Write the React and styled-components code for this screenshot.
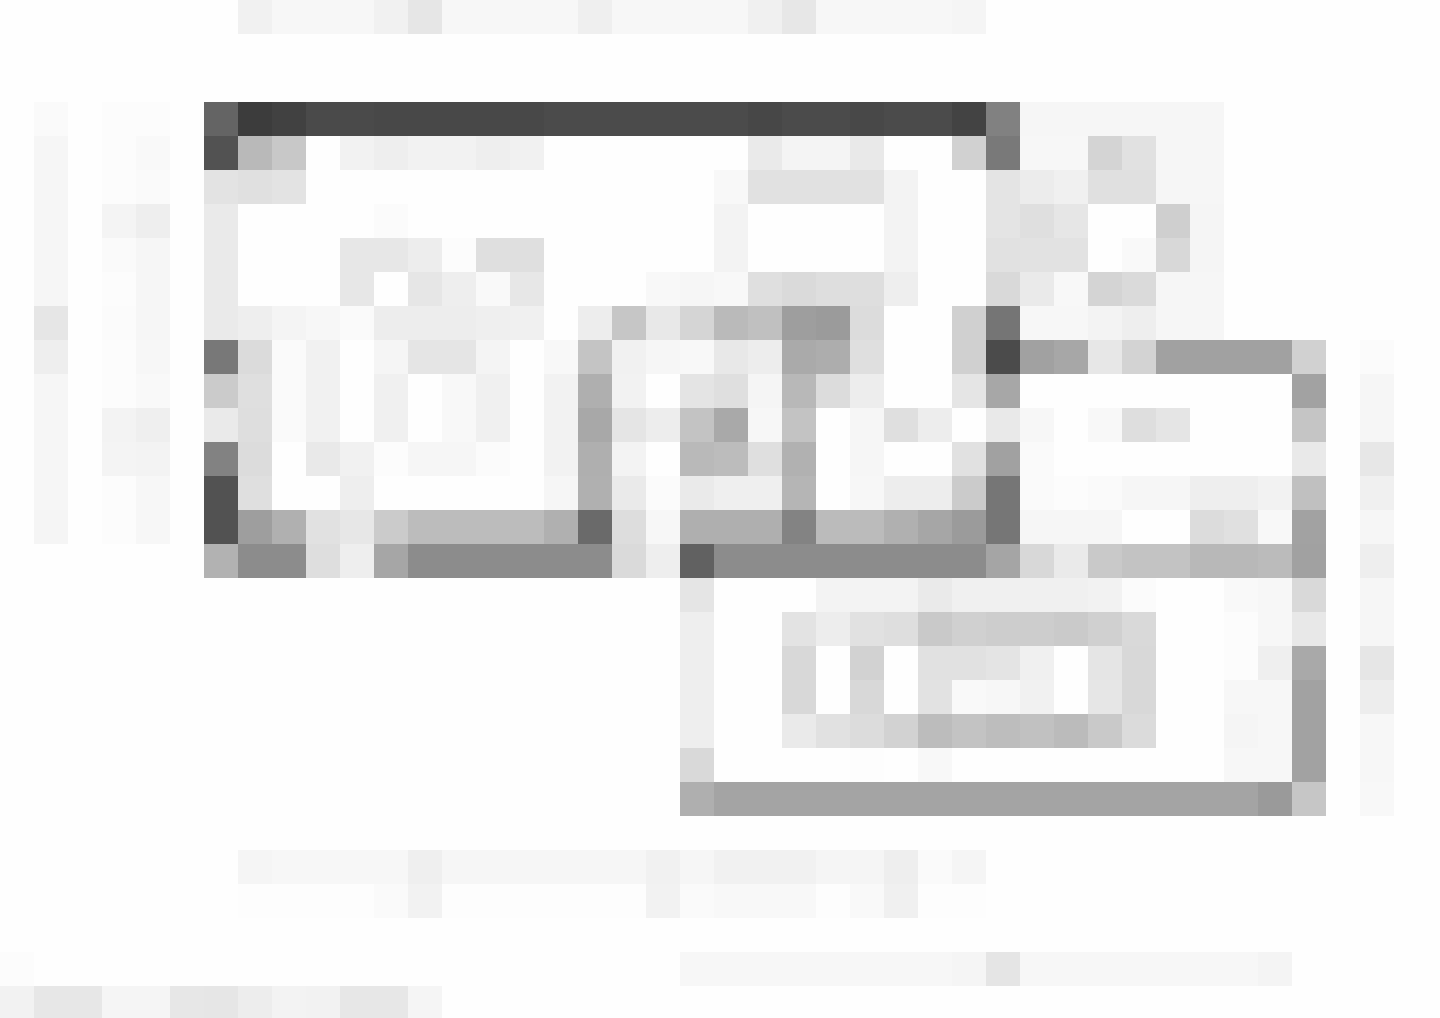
import React from "react";
import styled, { createGlobalStyle } from "styled-components";

const GlobalStyle = createGlobalStyle`
  body {
    margin: 0;
    background: #fefefe;
  }
`;

const Page = styled.main`
  width: 100%;
  overflow: hidden;
`;

const Plan = styled.svg`
  display: block;
  width: 100%;
  height: auto;
  shape-rendering: crispEdges;
`;

const TILE = 34;

// one entry per row of tiles: "column:grey" or "column*span:grey"
const rows = {
  0: "7:f1 8*3:f7 11:f1 12:e6 13*4:f7 17:ef 18*4:f7 22:f0 23:e7 24*4:f7 28:f5",
  3: "1:fa 3*2:fc 6:64 7:3c 8:41 9*2:4a 11*5:48 16*6:4b 22:47 23*2:4b 25:48 26*2:4b 28:43 29:81 30*6:f6",
  4: "1:f6 3:fc 4:f9 6:52 7:b9 8:c8 10:f2 11:ee 12*2:f2 14:ee 15:f1 22:ea 23*2:f4 25:e9 28:d1 29:79 30*2:f7 32:d4 33:e1 34*2:f6",
  5: "1:f6 3:fc 4:fa 6:e3 7:e0 8:e3 21:f8 22*4:e1 26:f3 29:e4 30:ec 31:f0 32*2:e0 34*2:f6",
  6: "1:f6 3:f4 4:ee 6:ea 11:fb 21:f3 26:f3 29:e4 30:df 31:e6 34:cf 35:f5",
  7: "1:f6 3:fa 4:f6 6:ea 10*2:e7 12:ed 13:fc 14*2:df 21:f3 26:f3 29:e1 30*2:e2 33:f9 34:d8 35:f5",
  8: "1:f6 3:fc 4:f6 6:ea 10:e7 12:e6 13:ee 14:f9 15:e7 19:f8 20:f6 21:f8 22:df 23:da 24*2:de 26:ee 29:d9 30:ea 31:f8 32:d4 33:da 34*2:f6",
  9: "1:e6 3:fb 4:f6 6:ea 7:ee 8:f4 9:f7 10:fa 11*3:ed 14:ef 15:f0 17:ed 18:c6 19:e8 20:d5 21:ba 22:c0 23:9e 24:9b 25:dc 28:d0 29:75 30*2:f7 32:f3 33:ee 34*2:f6",
  10: "1:ee 3:fc 4:f7 6:78 7:db 8:fa 9:f1 11:f5 12*2:e5 14:f4 16:f8 17:c4 18:f1 19:f6 20:f8 21:e8 22:ed 23:aa 24:ad 25:df 28:d0 29:4b 30:a1 31:a7 32:e7 33:d3 34*4:a1 38:d1 40:fb",
  11: "1:f6 3:fc 4:f9 6:cb 7:df 8:fa 9:f1 11:f0 13:f8 14:f0 16:f2 17:af 18:f2 20:e4 21:df 22:f5 23:b8 24:dc 25:ed 28:e5 29:a7 38:a2 40:f6",
  12: "1:f6 3:f3 4:ef 6:ea 7:de 8:fa 9:f1 11:f0 13:f8 14:f0 16:f2 17:a8 18:e5 19:ed 20:c3 21:a9 22:f7 23:c3 25:f6 26:df 27:ed 29:e9 30:f7 32:f8 33:de 34:e5 38:c5 40:f6",
  13: "1:f6 3:f4 4:f3 6:82 7:dc 9:e9 10:f1 11:fc 12*2:f6 14:fb 16:f2 17:af 18:f3 20:b9 21:bc 22:df 23:b1 25:f6 28:e1 29:a1 30:fa 38:e9 40:e7",
  14: "1:f6 3:fc 4:f7 6:52 7:df 10:ee 16:f6 17:b0 18:ea 19:fb 20:ea 21*2:ef 23:b5 25:f7 26*2:ed 28:cb 29:76 30:fa 31:fc 32:fa 33*2:f6 35*2:ee 37:f2 38:c0 40:f0",
  15: "1:f5 3:fc 4:f7 6:52 7:9e 8:b0 9:e1 10:e7 11:cb 12*4:bc 16:b0 17:6a 18:dd 19:f7 20*3:af 23:83 24*2:bb 26:b0 27:a6 28:9b 29:76 30*3:f6 35:dc 36:e0 37:f8 38:a2 40:f6",
  16: "6:b2 7*2:8c 9:de 10:ee 11:a6 12*6:8c 18:da 19:ee 20:61 21*8:8c 29:a5 30:d8 31:ea 32:c9 33*2:c3 35*2:b8 37:bb 38:a1 40:ee",
  17: "20:e5 24*3:f3 27:ea 28*4:f0 32:f2 33:fb 36:f9 37:f7 38:d9 40:f6",
  18: "20:ee 23:e3 24:ed 25:e1 26:de 27:c9 28:d0 29*2:cd 31:ca 32:d0 33:d9 36:fc 37:f7 38:e8 40:f6",
  19: "20:ee 23:d8 25:d2 27*2:e1 29:e4 30:f0 32:e5 33:d8 36:fc 37:ef 38:a9 40:e6",
  20: "20:ee 23:d8 25:d8 27:e2 28:f9 29:f7 30:f1 32:e6 33:d8 36*2:f7 38:a2 40:ed",
  21: "20:ee 23:ea 24:e1 25:dc 26:d2 27:bc 28:c3 29:bd 30:c1 31:bb 32:c9 33:db 36:f5 37:f7 38:a2 40:f7",
  22: "20:d9 25:fd 27:f8 36*2:f7 38:a2 40:f7",
  23: "20:af 21*16:a4 37:9a 38:c6 40:f8",
  25: "7:f5 8*4:f7 12:ef 13*6:f6 19:f1 20:f6 21*3:f1 24*2:f5 26:ee 27:fa 28:f5",
  26: "7*4:fd 11:fa 12:f2 13*6:fd 19:f2 20:fa 21*3:f8 24:fd 25:f9 26:f0 27*2:fd",
  28: "0:fc 20*8:f7 28:f5 29:e5 30*7:f7 37:f4",
  29: "0:f2 1*2:e7 3*2:f5 5:e7 6:e6 7:ed 8:f3 9:f2 10*2:e7 12:f5",
};

function Row({ y, tiles }) {
  return (
    <g>
      {tiles.split(" ").map((tile) => {
        const [place, grey] = tile.split(":");
        const [col, span = 1] = place.split("*").map(Number);
        return (
          <rect
            key={col}
            x={col * TILE}
            y={y * TILE}
            width={span * TILE}
            height={TILE}
            fill={`#${grey}${grey}${grey}`}
          />
        );
      })}
    </g>
  );
}

function App() {
  return (
    <Page>
      <GlobalStyle />
      <Plan viewBox="0 0 1440 1018" aria-hidden="true">
        {Object.entries(rows).map(([y, tiles]) => (
          <Row key={y} y={Number(y)} tiles={tiles} />
        ))}
      </Plan>
    </Page>
  );
}

export default App;
